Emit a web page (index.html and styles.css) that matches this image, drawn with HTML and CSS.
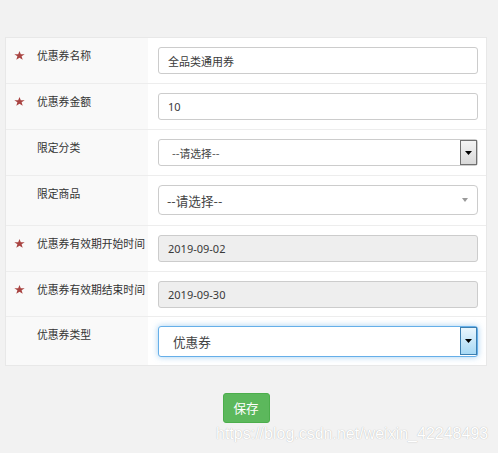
FILE: index.html
```html
<!DOCTYPE html>
<html>
<head>
<meta charset="utf-8">
<link rel="stylesheet" href="styles.css">
</head>
<body>
<div class="page">
  <div class="form">
    <div class="row">
      <div class="label"><span class="star"><svg viewBox="0 0 11 10" width="11" height="9" preserveAspectRatio="none"><polygon points="5.5,0 6.8,3.6 10.7,3.6 7.6,5.9 8.7,9.6 5.5,7.4 2.3,9.6 3.4,5.9 0.3,3.6 4.2,3.6"/></svg></span>优惠券名称</div>
      <div class="field"><input class="input" type="text" value="全品类通用券"></div>
    </div>
    <div class="row">
      <div class="label"><span class="star"><svg viewBox="0 0 11 10" width="11" height="9" preserveAspectRatio="none"><polygon points="5.5,0 6.8,3.6 10.7,3.6 7.6,5.9 8.7,9.6 5.5,7.4 2.3,9.6 3.4,5.9 0.3,3.6 4.2,3.6"/></svg></span>优惠券金额</div>
      <div class="field"><input class="input" type="text" value="10"></div>
    </div>
    <div class="row">
      <div class="label"><span class="star"></span>限定分类</div>
      <div class="field">
        <div class="select classic">
          <span class="sel-text">--请选择--</span>
          <span class="sel-btn"><svg viewBox="0 0 7 4" width="7" height="4"><polygon points="0,0 7,0 3.5,4"/></svg></span>
        </div>
      </div>
    </div>
    <div class="row tall">
      <div class="label"><span class="star"></span>限定商品</div>
      <div class="field">
        <div class="select chosen">
          <span class="sel-text">--请选择--</span>
          <span class="tri"></span>
        </div>
      </div>
    </div>
    <div class="row">
      <div class="label"><span class="star"><svg viewBox="0 0 11 10" width="11" height="9" preserveAspectRatio="none"><polygon points="5.5,0 6.8,3.6 10.7,3.6 7.6,5.9 8.7,9.6 5.5,7.4 2.3,9.6 3.4,5.9 0.3,3.6 4.2,3.6"/></svg></span>优惠券有效期开始时间</div>
      <div class="field"><input class="input disabled" type="text" value="2019-09-02" readonly></div>
    </div>
    <div class="row short">
      <div class="label"><span class="star"><svg viewBox="0 0 11 10" width="11" height="9" preserveAspectRatio="none"><polygon points="5.5,0 6.8,3.6 10.7,3.6 7.6,5.9 8.7,9.6 5.5,7.4 2.3,9.6 3.4,5.9 0.3,3.6 4.2,3.6"/></svg></span>优惠券有效期结束时间</div>
      <div class="field"><input class="input disabled" type="text" value="2019-09-30" readonly></div>
    </div>
    <div class="row tall last">
      <div class="label"><span class="star"></span>优惠券类型</div>
      <div class="field">
        <div class="select classic focus">
          <span class="sel-text">优惠券</span>
          <span class="sel-btn"><svg viewBox="0 0 7 4" width="7" height="4"><polygon points="0,0 7,0 3.5,4"/></svg></span>
        </div>
      </div>
    </div>
  </div>
  <div class="actions">
    <button class="btn-save" type="button">保存</button>
  </div>
  <div class="watermark">https://blog.csdn.net/weixin_42248493</div>
</div>
</body>
</html>
```
FILE: styles.css
```css
* { box-sizing: border-box; }
html, body {
  margin: 0;
  padding: 0;
  background: #f2f2f2;
}
body {
  font-family: "Noto Sans CJK SC", "Liberation Sans", sans-serif;
  font-size: 10.8px;
  color: #333;
}
.page {
  position: relative;
  width: 498px;
  height: 453px;
  padding: 37px 0 0 5px;
}
.form {
  width: 482px;
  border: 1px solid #e8e8e8;
  background: #fff;
}
.row {
  display: grid;
  grid-template-columns: 142px 1fr;
  border-top: 1px solid #ededed;
}
.row:first-child { border-top: 0; }
.label {
  background: #f9f9f9;
  padding: 9px 0 0 8px;
  display: flex;
  align-items: flex-start;
  line-height: 17px;
  white-space: nowrap;
  color: #333;
}
.star {
  flex: none;
  width: 23px;
  height: 17px;
  padding-top: 4px;
}
.star svg {
  display: block;
  fill: #a94442;
}
.field {
  padding: 9px 8px 9px 10px;
}
.row.tall .field { padding-bottom: 10px; }
.row.short .field { padding-bottom: 8px; }
.row.last .field { padding-bottom: 8px; }
.input {
  display: block;
  width: 100%;
  height: 27px;
  margin: 0;
  padding: 0 9px;
  border: 1px solid #cccccc;
  border-radius: 3px;
  background: #fff;
  font-family: "Noto Sans", "Noto Sans CJK SC", sans-serif;
  font-size: 11px;
  color: #3a3a3a;
  outline: none;
}
.input.disabled {
  background: #eeeeee;
}
.select {
  display: flex;
  align-items: center;
  width: 100%;
  height: 27px;
  border: 1px solid #cccccc;
  border-radius: 3px;
  background: #fff;
  color: #444;
}
.sel-text {
  flex: 1;
  white-space: nowrap;
}
.select.classic .sel-text {
  padding-left: 13px;
  font-size: 10.8px;
}
.sel-btn {
  flex: none;
  align-self: flex-start;
  width: 17px;
  height: 25px;
  display: flex;
  align-items: center;
  justify-content: center;
  border: 1px solid #707070;
  background: linear-gradient(#f4f4f4, #d9d9d9);
}
.sel-btn svg { display: block; fill: #000; }
.select.chosen {
  height: 30px;
  border-radius: 4px;
  padding: 0 9px 0 8px;
}
.select.chosen .sel-text {
  font-size: 12.6px;
}
.tri {
  flex: none;
  width: 0;
  height: 0;
  border-left: 3px solid transparent;
  border-right: 3px solid transparent;
  border-top: 4px solid #9a9a9a;
}
.select.focus {
  height: 31px;
  border-color: #66afe9;
  box-shadow: 0 0 6px rgba(102, 175, 233, 0.6);
}
.select.focus .sel-text {
  padding-left: 14px;
  font-size: 12.6px;
}
.select.focus .sel-btn {
  height: 28px;
  border-color: #3c7fb1;
  background: linear-gradient(#eaf6fd, #a7d9f5);
}
.actions {
  width: 482px;
  display: flex;
  justify-content: center;
  padding-top: 27px;
}
.btn-save {
  width: 47px;
  height: 30px;
  margin: 0;
  padding: 0;
  border: 1px solid #4cae4c;
  border-radius: 3px;
  background: #5cb85c;
  color: #fff;
  font-family: "Noto Sans CJK SC", "Liberation Sans", sans-serif;
  font-size: 12.6px;
  line-height: 28px;
}
.watermark {
  position: absolute;
  left: 216px;
  top: 425px;
  font-family: "Liberation Sans", Arial, sans-serif;
  font-size: 16px;
  line-height: 18px;
  color: #ffffff;
  text-shadow: 0 0 1px rgba(0, 0, 0, 0.3);
  white-space: nowrap;
}
```
